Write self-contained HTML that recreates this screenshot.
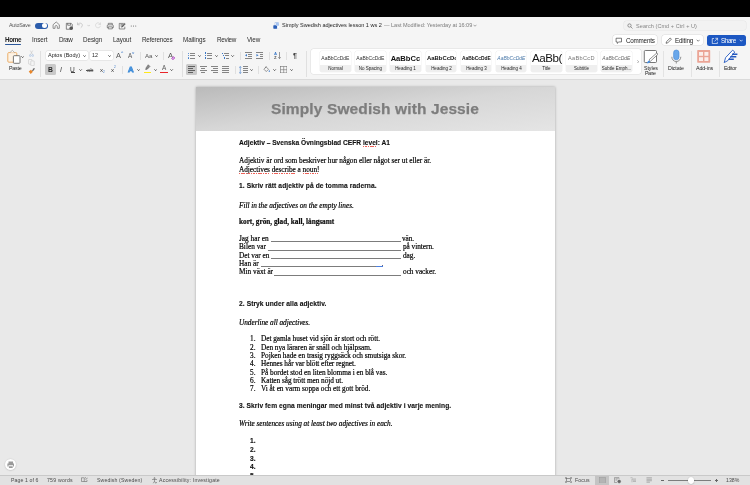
<!DOCTYPE html>
<html><head><meta charset="utf-8">
<style>
*{box-sizing:border-box;margin:0;padding:0}
html,body{width:750px;height:485px;overflow:hidden;background:#e9e9e9;font-family:"Liberation Sans",sans-serif;}
.t{position:absolute;white-space:nowrap;line-height:1;will-change:transform}
.a{position:absolute}
#top{position:absolute;left:0;top:0;width:750px;height:16.5px;background:#000}
#chrome{position:absolute;left:0;top:16.5px;width:750px;height:63px;background:#f5f5f5;border-bottom:1px solid #dadada}
#doc{position:absolute;left:0;top:0;width:750px;height:475px;overflow:hidden}
#page{position:absolute;left:196px;top:87px;width:358.5px;height:400px;background:#fff;box-shadow:0 0 2.5px rgba(0,0,0,.3)}
#banner{position:absolute;left:196px;top:87px;width:358.5px;height:44px;background:linear-gradient(to bottom right,#bababa,#d7d7d7 50%,#e5e5e5)}
#status{position:absolute;left:0;top:475px;width:750px;height:10px;background:#e2e2e2;border-top:.5px solid #c9c9c9}
.sep{position:absolute;width:.6px;background:#d6d6d6}
.box{position:absolute;background:#fff;border-radius:1.5px;box-shadow:0 0 0 .4px #d9d9d9}
.tile{position:absolute;top:51.2px;width:30.8px;height:20.6px;background:#fff;border-radius:1.5px;overflow:hidden;box-shadow:0 0 0 .3px #e6e6e6}
.tile i{position:absolute;left:0;top:13.6px;width:100%;height:7px;background:#efefef;display:block}
.tile .t{left:0;width:100%;text-align:center}
.ul{position:absolute;height:.6px;background:#7c7c7c}
</style></head><body>
<div id="doc">
<div id="page"></div>
<div id="banner"></div>

<span class="t" style="left:271.20px;top:101.18px;font-size:15.50px;font-weight:bold;color:#7d7d7d;-webkit-text-stroke:.25px #7d7d7d;letter-spacing:0.115px;">Simply Swedish with Jessie</span>
<span class="t" style="left:239.00px;top:140.17px;font-size:6.65px;font-weight:bold;color:#111;-webkit-text-stroke:.12px #111;letter-spacing:-0.002px;">Adjektiv – Svenska Övningsblad CEFR level: A1</span>
<span class="t" style="left:239.00px;top:157.39px;font-size:7.30px;font-family:'Liberation Serif',serif;color:#000;-webkit-text-stroke:.18px #000;letter-spacing:-0.017px;">Adjektiv är ord som beskriver hur någon eller något ser ut eller är.</span>
<span class="t" style="left:239.00px;top:165.89px;font-size:7.30px;font-family:'Liberation Serif',serif;color:#000;-webkit-text-stroke:.18px #000;letter-spacing:-0.029px;">Adjectives describe a noun!</span>
<span class="t" style="left:239.00px;top:183.37px;font-size:6.65px;font-weight:bold;color:#111;-webkit-text-stroke:.12px #111;letter-spacing:0.096px;">1. Skriv rätt adjektiv på de tomma raderna.</span>
<span class="t" style="left:239.00px;top:201.79px;font-size:7.30px;font-family:'Liberation Serif',serif;font-style:italic;color:#000;-webkit-text-stroke:.18px #000;letter-spacing:-0.037px;">Fill in the adjectives on the empty lines.</span>
<span class="t" style="left:239.00px;top:218.09px;font-size:7.30px;font-family:'Liberation Serif',serif;font-weight:bold;color:#111;-webkit-text-stroke:.18px #000;letter-spacing:-0.029px;">kort, grön, glad, kall, långsamt</span>
<span class="t" style="left:239.00px;top:235.09px;font-size:7.30px;font-family:'Liberation Serif',serif;color:#000;-webkit-text-stroke:.18px #000;">Jag har en</span>
<div class="ul" style="left:270.6px;top:241.45px;width:130.2px"></div>
<span class="t" style="left:402.30px;top:235.09px;font-size:7.30px;font-family:'Liberation Serif',serif;color:#000;-webkit-text-stroke:.18px #000;letter-spacing:-0.116px;">vän.</span>
<span class="t" style="left:239.00px;top:243.39px;font-size:7.30px;font-family:'Liberation Serif',serif;color:#000;-webkit-text-stroke:.18px #000;">Bilen var</span>
<div class="ul" style="left:267.7px;top:249.75px;width:133.8px"></div>
<span class="t" style="left:403.00px;top:243.39px;font-size:7.30px;font-family:'Liberation Serif',serif;color:#000;-webkit-text-stroke:.18px #000;letter-spacing:-0.029px;">på vintern.</span>
<span class="t" style="left:239.00px;top:251.69px;font-size:7.30px;font-family:'Liberation Serif',serif;color:#000;-webkit-text-stroke:.18px #000;">Det var en</span>
<div class="ul" style="left:271.2px;top:258.05px;width:130.3px"></div>
<span class="t" style="left:403.00px;top:251.69px;font-size:7.30px;font-family:'Liberation Serif',serif;color:#000;-webkit-text-stroke:.18px #000;letter-spacing:-0.041px;">dag.</span>
<span class="t" style="left:239.00px;top:259.99px;font-size:7.30px;font-family:'Liberation Serif',serif;color:#000;-webkit-text-stroke:.18px #000;">Han är</span>
<div class="ul" style="left:260.5px;top:266.35px;width:122.8px"></div>
<span class="t" style="left:239.00px;top:268.19px;font-size:7.30px;font-family:'Liberation Serif',serif;color:#000;-webkit-text-stroke:.18px #000;">Min växt är</span>
<div class="ul" style="left:274.3px;top:274.55px;width:127.2px"></div>
<span class="t" style="left:403.00px;top:268.19px;font-size:7.30px;font-family:'Liberation Serif',serif;color:#000;-webkit-text-stroke:.18px #000;letter-spacing:-0.022px;">och vacker.</span>
<div class="a" style="left:376.4px;top:266.2px;width:6.9px;height:.8px;background:#4a7fe0"></div><div class="a" style="left:382.3px;top:265.2px;width:.7px;height:1.2px;background:#6a6a8a"></div>
<span class="t" style="left:239.00px;top:301.47px;font-size:6.65px;font-weight:bold;color:#111;-webkit-text-stroke:.12px #111;letter-spacing:0.081px;">2. Stryk under alla adjektiv.</span>
<span class="t" style="left:239.00px;top:318.59px;font-size:7.30px;font-family:'Liberation Serif',serif;font-style:italic;color:#000;-webkit-text-stroke:.18px #000;letter-spacing:-0.031px;">Underline all adjectives.</span>
<span class="t" style="left:250.00px;top:335.49px;font-size:7.30px;font-family:'Liberation Serif',serif;color:#000;-webkit-text-stroke:.18px #000;">1.</span>
<span class="t" style="left:260.90px;top:335.49px;font-size:7.30px;font-family:'Liberation Serif',serif;color:#000;-webkit-text-stroke:.18px #000;letter-spacing:-0.047px;">Det gamla huset vid sjön är stort och rött.</span>
<span class="t" style="left:250.00px;top:343.76px;font-size:7.30px;font-family:'Liberation Serif',serif;color:#000;-webkit-text-stroke:.18px #000;">2.</span>
<span class="t" style="left:260.90px;top:343.76px;font-size:7.30px;font-family:'Liberation Serif',serif;color:#000;-webkit-text-stroke:.18px #000;letter-spacing:-0.039px;">Den nya läraren är snäll och hjälpsam.</span>
<span class="t" style="left:250.00px;top:352.03px;font-size:7.30px;font-family:'Liberation Serif',serif;color:#000;-webkit-text-stroke:.18px #000;">3.</span>
<span class="t" style="left:260.90px;top:352.03px;font-size:7.30px;font-family:'Liberation Serif',serif;color:#000;-webkit-text-stroke:.18px #000;letter-spacing:-0.034px;">Pojken hade en trasig ryggsäck och smutsiga skor.</span>
<span class="t" style="left:250.00px;top:360.30px;font-size:7.30px;font-family:'Liberation Serif',serif;color:#000;-webkit-text-stroke:.18px #000;">4.</span>
<span class="t" style="left:260.90px;top:360.30px;font-size:7.30px;font-family:'Liberation Serif',serif;color:#000;-webkit-text-stroke:.18px #000;letter-spacing:-0.052px;">Hennes hår var blött efter regnet.</span>
<span class="t" style="left:250.00px;top:368.57px;font-size:7.30px;font-family:'Liberation Serif',serif;color:#000;-webkit-text-stroke:.18px #000;">5.</span>
<span class="t" style="left:260.90px;top:368.57px;font-size:7.30px;font-family:'Liberation Serif',serif;color:#000;-webkit-text-stroke:.18px #000;letter-spacing:-0.032px;">På bordet stod en liten blomma i en blå vas.</span>
<span class="t" style="left:250.00px;top:376.84px;font-size:7.30px;font-family:'Liberation Serif',serif;color:#000;-webkit-text-stroke:.18px #000;">6.</span>
<span class="t" style="left:260.90px;top:376.84px;font-size:7.30px;font-family:'Liberation Serif',serif;color:#000;-webkit-text-stroke:.18px #000;letter-spacing:-0.053px;">Katten såg trött men nöjd ut.</span>
<span class="t" style="left:250.00px;top:385.11px;font-size:7.30px;font-family:'Liberation Serif',serif;color:#000;-webkit-text-stroke:.18px #000;">7.</span>
<span class="t" style="left:260.90px;top:385.11px;font-size:7.30px;font-family:'Liberation Serif',serif;color:#000;-webkit-text-stroke:.18px #000;letter-spacing:-0.020px;">Vi åt en varm soppa och ett gott bröd.</span>
<span class="t" style="left:239.00px;top:402.87px;font-size:6.65px;font-weight:bold;color:#111;-webkit-text-stroke:.12px #111;letter-spacing:0.068px;">3. Skriv fem egna meningar med minst två adjektiv i varje mening.</span>
<span class="t" style="left:239.00px;top:420.19px;font-size:7.30px;font-family:'Liberation Serif',serif;font-style:italic;color:#000;-webkit-text-stroke:.18px #000;letter-spacing:-0.022px;">Write sentences using at least two adjectives in each.</span>
<span class="t" style="left:250.00px;top:437.87px;font-size:6.65px;font-weight:bold;color:#111;-webkit-text-stroke:.12px #111;">1.</span>
<span class="t" style="left:250.00px;top:446.72px;font-size:6.65px;font-weight:bold;color:#111;-webkit-text-stroke:.12px #111;">2.</span>
<span class="t" style="left:250.00px;top:455.57px;font-size:6.65px;font-weight:bold;color:#111;-webkit-text-stroke:.12px #111;">3.</span>
<span class="t" style="left:250.00px;top:464.42px;font-size:6.65px;font-weight:bold;color:#111;-webkit-text-stroke:.12px #111;">4.</span>
<span class="t" style="left:250.00px;top:473.27px;font-size:6.65px;font-weight:bold;color:#111;-webkit-text-stroke:.12px #111;">5.</span>
<div class="a" style="left:362.9px;top:146.0px;width:14.4px;height:1px;background:repeating-linear-gradient(90deg,#ee6158 0 1.1px,transparent 1.1px 1.7px)"></div>
<div class="a" style="left:239.0px;top:173.0px;width:31.2px;height:1px;background:repeating-linear-gradient(90deg,#ee6158 0 1.1px,transparent 1.1px 1.7px)"></div>
<div class="a" style="left:272.2px;top:173.0px;width:24.2px;height:1px;background:repeating-linear-gradient(90deg,#ee6158 0 1.1px,transparent 1.1px 1.7px)"></div>
<div class="a" style="left:302.5px;top:173.0px;width:15.1px;height:1px;background:repeating-linear-gradient(90deg,#ee6158 0 1.1px,transparent 1.1px 1.7px)"></div>
</div>
<div id="top"></div><div id="chrome"></div>
<!-- title bar -->
<div class="a" style="left:35.4px;top:22.5px;width:12.5px;height:6px;border-radius:3px;background:#2b5cab"></div>
<div class="a" style="left:42.3px;top:23px;width:5px;height:5px;border-radius:2.5px;background:#fff"></div>
<svg class="a" style="left:52.4px;top:21.4px" width="8.400" height="8.400" viewBox="0 0 16 16" fill="none" stroke="#5a5a5a" stroke-width="1.200"><path d="M2 7.200 8 1.800l6 5.400V14h-3.800v-3.200a2.200 2.200 0 0 0-4.400 0V14H2z"/></svg>
<svg class="a" style="left:64.6px;top:21.5px" width="8.600" height="8.600" viewBox="0 0 16 16" fill="none" stroke="#555" stroke-width="1.3"><path d="M2.500 2.500h9l2 2v9h-11z M5 2.500v3.500h5.500v-3.500"/><circle cx="11.500" cy="11.500" r="2.600" fill="#555"/></svg>
<svg class="a" style="left:76.4px;top:21.3px" width="8" height="8" viewBox="0 0 16 16" fill="none" stroke="#b9b9b9" stroke-width="1.4"><path d="M3 3v4.500h4.500 M3.300 7.200C5 4.500 8.500 3.500 11 5.200c2.600 1.800 2.300 5.800-1.500 8.300"/></svg>
<svg class="a" style="left:86.8px;top:24px" width="3.4" height="3" viewBox="0 0 8 6" fill="none" stroke="#b9b9b9" stroke-width="1.4"><path d="M1 1.500l3 3 3-3"/></svg>
<svg class="a" style="left:93.8px;top:21.3px" width="8" height="8" viewBox="0 0 16 16" fill="none" stroke="#d2d2d2" stroke-width="1.4"><path d="M13 3v4h-4 M12.800 7A5 5 0 1 0 13 9.500"/></svg>
<svg class="a" style="left:105.600px;top:21.5px" width="8.600" height="8.200" viewBox="0 0 17 16" fill="none" stroke="#555" stroke-width="1.3"><path d="M4.500 5.500v-3h8v3 M4.500 11H2.500V7.500a2 2 0 0 1 2-2h8a2 2 0 0 1 2 2V11h-2 M4.500 9.500h8v4h-8z"/></svg>
<svg class="a" style="left:117.600px;top:21.5px" width="8.600" height="8.400" viewBox="0 0 17 16" fill="none" stroke="#555" stroke-width="1.3"><path d="M13.500 9v4.500h-11v-11h9 M5 5h5 M5 7.500h3"/><path d="M14.500 3.500 9 9.500l-2 .8.600-2.200 5.500-5.800z" fill="#555" stroke-width=".8"/></svg>
<svg class="a" style="left:130px;top:24.6px" width="7" height="2" viewBox="0 0 14 4" fill="#555"><circle cx="2.500" cy="2" r="1.050"/><circle cx="7" cy="2" r="1.050"/><circle cx="11.500" cy="2" r="1.050"/></svg>
<!-- doc title -->
<svg class="a" style="left:272.6px;top:21.6px" width="6.800" height="7.600" viewBox="0 0 14 16"><path d="M4 1h7l2.500 2.500V15H4z" fill="#fff" stroke="#8aa8d8" stroke-width="1"/><rect x=".5" y="7" width="8" height="7" rx="1" fill="#2b5fb8"/><path d="M6 1h5l2.500 2.500V8H6z" fill="#a8c4ee"/></svg>
<svg class="a" style="left:472.8px;top:24.4px" width="4" height="3" viewBox="0 0 8 6" fill="none" stroke="#777" stroke-width="1.300"><path d="M1 1.500l3 3 3-3"/></svg>
<!-- search -->
<div class="a" style="left:624.4px;top:20.8px;width:121.800px;height:9.500px;border-radius:2.500px;background:#f2f2f2;box-shadow:0 0 0 .5px #e5e5e5"></div>
<svg class="a" style="left:626.8px;top:22.6px" width="6" height="6" viewBox="0 0 12 12" fill="none" stroke="#666" stroke-width="1.300"><circle cx="5" cy="5" r="3.300"/><path d="M7.500 7.500 11 11"/></svg>
<!-- comments / editing / share -->
<div class="a" style="left:612.7px;top:35.3px;width:44.300px;height:10.200px;border-radius:2.500px;background:#fff;box-shadow:0 0 0 .5px #dcdcdc"></div>
<svg class="a" style="left:615.4px;top:36.9px" width="7.600" height="7.400" viewBox="0 0 15 15" fill="none" stroke="#333" stroke-width="1.300"><path d="M2 2.500h11v7.500H7.500L4.500 13v-3H2z"/></svg>
<div class="a" style="left:662.1px;top:35.3px;width:40.600px;height:10.200px;border-radius:2.500px;background:#fff;box-shadow:0 0 0 .5px #dcdcdc"></div>
<svg class="a" style="left:665.2px;top:36.8px" width="7.400" height="7.400" viewBox="0 0 15 15" fill="none" stroke="#333" stroke-width="1.300"><path d="M10.500 2 13 4.500 5.500 12l-3.300.800.800-3.300z"/></svg>
<svg class="a" style="left:696px;top:39.3px" width="4.400" height="3" viewBox="0 0 8 6" fill="none" stroke="#444" stroke-width="1.300"><path d="M1 1.500l3 3 3-3"/></svg>
<div class="a" style="left:707.4px;top:34.9px;width:38.300px;height:10.900px;border-radius:2.500px;background:#1c57c2"></div>
<svg class="a" style="left:711px;top:36.6px" width="7.600" height="7.600" viewBox="0 0 15 15" fill="none" stroke="#fff" stroke-width="1.300"><path d="M6 3H2.500v10h10V9.500"/><path d="M8.500 2.500H13V7 M13 2.500 7 8.500"/></svg>
<svg class="a" style="left:738.6px;top:39.3px" width="4.400" height="3" viewBox="0 0 8 6" fill="none" stroke="#fff" stroke-width="1.300"><path d="M1 1.500l3 3 3-3"/></svg>

<span class="t" style="left:9.40px;top:22.81px;font-size:5.30px;color:#555;letter-spacing:-0.173px;">AutoSave</span>
<span class="t" style="left:5.10px;top:36.57px;font-size:6.30px;font-weight:bold;color:#222;letter-spacing:-0.351px;">Home</span>
<span class="t" style="left:31.80px;top:36.57px;font-size:6.30px;color:#2c2c2c;letter-spacing:-0.059px;">Insert</span>
<span class="t" style="left:58.60px;top:36.57px;font-size:6.30px;color:#2c2c2c;letter-spacing:-0.300px;">Draw</span>
<span class="t" style="left:82.80px;top:36.57px;font-size:6.30px;color:#2c2c2c;letter-spacing:-0.085px;">Design</span>
<span class="t" style="left:112.50px;top:36.57px;font-size:6.30px;color:#2c2c2c;letter-spacing:-0.153px;">Layout</span>
<span class="t" style="left:141.90px;top:36.57px;font-size:6.30px;color:#2c2c2c;letter-spacing:-0.182px;">References</span>
<span class="t" style="left:183.40px;top:36.57px;font-size:6.30px;color:#2c2c2c;letter-spacing:-0.064px;">Mailings</span>
<span class="t" style="left:216.90px;top:36.57px;font-size:6.30px;color:#2c2c2c;letter-spacing:-0.259px;">Review</span>
<span class="t" style="left:246.80px;top:36.57px;font-size:6.30px;color:#2c2c2c;letter-spacing:-0.085px;">View</span>
<div class="a" style="left:5px;top:44px;width:16.3px;height:1.3px;background:#2b579a;border-radius:1px"></div>
<svg class="a" style="left:5.00px;top:48.00px" width="18.00" height="18.00" viewBox="5.00 48.00 18.00 18.00"><rect x="7.800" y="52.600" width="9" height="9.600" rx="1" fill="#fdf3e6" stroke="#eaa75c" stroke-width=".9"/><path d="M10 52.600 12.300 50.400 14.600 52.600" fill="#fff" stroke="#999" stroke-width=".7"/><rect x="13.400" y="55.700" width="6.600" height="7.600" rx=".8" fill="#fff" stroke="#555" stroke-width=".8"/></svg>
<svg class="a" style="left:21.1px;top:56.3px" width="3.2" height="2.0" viewBox="0 0 8 5" fill="none" stroke="#444" stroke-width="2.3"><path d="M1 1l3 3 3-3"/></svg>
<span class="t" style="left:8.70px;top:65.91px;font-size:5.30px;color:#222;letter-spacing:-0.191px;">Paste</span>
<svg class="a" style="left:28.50px;top:49.90px" width="5.00" height="7.00" viewBox="0 0 10 14" ><path d="M2.500 1 7 9 M7.500 1 3 9" stroke="#c4c4c4" stroke-width="1.100" fill="none"/><circle cx="2.500" cy="11" r="1.800" fill="none" stroke="#9bb8e0" stroke-width="1.100"/><circle cx="7.500" cy="11" r="1.800" fill="none" stroke="#9bb8e0" stroke-width="1.100"/></svg>
<svg class="a" style="left:27.80px;top:58.90px" width="7.00" height="7.40" viewBox="0 0 14 15" ><rect x="1" y="1" width="7" height="9.500" rx="1" fill="none" stroke="#c8c8c8" stroke-width="1.200"/><rect x="5.500" y="4" width="7" height="9.500" rx="1" fill="#f5f5f5" stroke="#c8c8c8" stroke-width="1.200"/></svg>
<svg class="a" style="left:27.60px;top:68.30px" width="7.40" height="6.60" viewBox="0 0 15 13" ><path d="M1.500 7 6 3.500l4 4L5.500 12z" fill="#e8862a"/><path d="M8 4.500 12.500 1l1 1-3.500 4.500z" fill="#555"/><path d="M10 1h4" stroke="#555" stroke-width="1"/></svg>
<div class="sep" style="left:40.4px;top:50.5px;height:26.2px;background:#e0e0e0"></div>
<div class="box" style="left:45.6px;top:50.6px;width:42.600px;height:9.600px"></div>
<span class="t" style="left:48.00px;top:53.14px;font-size:5.50px;color:#222;letter-spacing:0.034px;">Aptos (Body)</span>
<svg class="a" style="left:83.3px;top:55.0px" width="3.2" height="2.0" viewBox="0 0 8 5" fill="none" stroke="#444" stroke-width="2.3"><path d="M1 1l3 3 3-3"/></svg>
<div class="box" style="left:90px;top:50.6px;width:22.800px;height:9.600px"></div>
<span class="t" style="left:92.40px;top:53.31px;font-size:5.30px;color:#222;">12</span>
<svg class="a" style="left:108.2px;top:55.0px" width="3.2" height="2.0" viewBox="0 0 8 5" fill="none" stroke="#444" stroke-width="2.3"><path d="M1 1l3 3 3-3"/></svg>
<span class="t" style="left:116.00px;top:51.84px;font-size:7.40px;color:#555;">A</span>
<span class="t" style="left:121.00px;top:51.11px;font-size:4.00px;color:#3a78c8;font-weight:bold;">^</span>
<span class="t" style="left:128.00px;top:52.77px;font-size:6.30px;color:#555;">A</span>
<span class="t" style="left:132.20px;top:51.41px;font-size:4.00px;color:#3a78c8;font-weight:bold;">˅</span>
<div class="sep" style="left:139.6px;top:51.5px;height:8.0px;background:#e0e0e0"></div>
<span class="t" style="left:145.20px;top:52.75px;font-size:6.20px;color:#555;letter-spacing:-0.092px;">Aa</span>
<svg class="a" style="left:155.0px;top:55.2px" width="3.2" height="2.0" viewBox="0 0 8 5" fill="none" stroke="#444" stroke-width="2.3"><path d="M1 1l3 3 3-3"/></svg>
<div class="sep" style="left:163.0px;top:51.5px;height:8.0px;background:#e0e0e0"></div>
<span class="t" style="left:167.60px;top:51.67px;font-size:7.60px;color:#555;">A</span>
<svg class="a" style="left:171.10px;top:55.60px" width="4.40" height="4.00" viewBox="0 0 9 8" ><path d="M1 5 5 1l3 3-4 3.500z" fill="#d9a0e6" stroke="#b04cc0" stroke-width="1.500"/></svg>
<div class="sep" style="left:181.8px;top:50.5px;height:26.2px;background:#e0e0e0"></div>
<div class="a" style="left:45.200px;top:64.100px;width:10.600px;height:10.600px;border-radius:1.500px;background:#c9c9c9"></div>
<span class="t" style="left:48.20px;top:66.94px;font-size:6.80px;font-weight:bold;color:#2a2a2a;">B</span>
<span class="t" style="left:60.40px;top:66.94px;font-size:6.80px;font-style:italic;color:#3a3a3a;">I</span>
<span class="t" style="left:70.30px;top:66.71px;font-size:6.60px;color:#3a3a3a;">U</span>
<div class="a" style="left:70.600px;top:72.400px;width:4.600px;height:.6px;background:#444"></div>
<svg class="a" style="left:79.4px;top:68.8px" width="3.2" height="2.0" viewBox="0 0 8 5" fill="none" stroke="#444" stroke-width="2.3"><path d="M1 1l3 3 3-3"/></svg>
<span class="t" style="left:87.00px;top:66.92px;font-size:6.00px;color:#555;letter-spacing:-.1px;">ab</span>
<div class="a" style="left:86.400px;top:69.900px;width:7px;height:.6px;background:#555"></div>
<span class="t" style="left:99.90px;top:67.14px;font-size:6.10px;color:#3a3a3a;">x</span>
<span class="t" style="left:103.20px;top:70.69px;font-size:3.20px;color:#3a78c8;">2</span>
<span class="t" style="left:110.90px;top:67.14px;font-size:6.10px;color:#3a3a3a;">x</span>
<span class="t" style="left:114.20px;top:65.69px;font-size:3.20px;color:#3a78c8;">2</span>
<div class="sep" style="left:121.8px;top:65.5px;height:8.0px;background:#e0e0e0"></div>
<span class="t" style="left:127.80px;top:65.70px;font-size:7.80px;font-weight:bold;color:#9cc6f0;-webkit-text-stroke:.8px #3a8ad8;">A</span>
<svg class="a" style="left:136.7px;top:68.8px" width="3.2" height="2.0" viewBox="0 0 8 5" fill="none" stroke="#444" stroke-width="2.3"><path d="M1 1l3 3 3-3"/></svg>
<svg class="a" style="left:144.10px;top:64.00px" width="7.00" height="6.40" viewBox="0 0 14 13" ><path d="M8.500 1.500 12 5 6.500 10.500 3.500 11l.5-3z" fill="#8a8a8a" stroke="#555" stroke-width="1.100"/><path d="M2.500 12l1-1" stroke="#555"/></svg>
<div class="a" style="left:144px;top:71.500px;width:7.200px;height:1.700px;background:#ffe81a"></div>
<svg class="a" style="left:153.7px;top:68.8px" width="3.2" height="2.0" viewBox="0 0 8 5" fill="none" stroke="#444" stroke-width="2.3"><path d="M1 1l3 3 3-3"/></svg>
<span class="t" style="left:161.80px;top:65.38px;font-size:6.40px;color:#555;">A</span>
<div class="a" style="left:160.400px;top:71.500px;width:7.200px;height:1.700px;background:#e8252a"></div>
<svg class="a" style="left:170.4px;top:68.8px" width="3.2" height="2.0" viewBox="0 0 8 5" fill="none" stroke="#444" stroke-width="2.3"><path d="M1 1l3 3 3-3"/></svg>
<div class="a" style="left:187.800px;top:52.55px;width:1.300px;height:1.300px;border-radius:1px;background:#3a78c8"></div>
<div class="a" style="left:190.200px;top:52.80px;width:4.800px;height:.7px;background:#858585"></div>
<div class="a" style="left:187.800px;top:54.95px;width:1.300px;height:1.300px;border-radius:1px;background:#3a78c8"></div>
<div class="a" style="left:190.200px;top:55.20px;width:4.800px;height:.7px;background:#858585"></div>
<div class="a" style="left:187.800px;top:57.35px;width:1.300px;height:1.300px;border-radius:1px;background:#3a78c8"></div>
<div class="a" style="left:190.200px;top:57.60px;width:4.800px;height:.7px;background:#858585"></div>
<svg class="a" style="left:197.9px;top:55.0px" width="3.2" height="2.0" viewBox="0 0 8 5" fill="none" stroke="#444" stroke-width="2.3"><path d="M1 1l3 3 3-3"/></svg>
<div class="a" style="left:205px;top:52.40px;width:.8px;height:1.600px;background:#3a78c8"></div>
<div class="a" style="left:207.200px;top:52.80px;width:4.800px;height:.7px;background:#858585"></div>
<div class="a" style="left:205px;top:54.80px;width:.8px;height:1.600px;background:#3a78c8"></div>
<div class="a" style="left:207.200px;top:55.20px;width:4.800px;height:.7px;background:#858585"></div>
<div class="a" style="left:205px;top:57.20px;width:.8px;height:1.600px;background:#3a78c8"></div>
<div class="a" style="left:207.200px;top:57.60px;width:4.800px;height:.7px;background:#858585"></div>
<svg class="a" style="left:214.6px;top:55.0px" width="3.2" height="2.0" viewBox="0 0 8 5" fill="none" stroke="#444" stroke-width="2.3"><path d="M1 1l3 3 3-3"/></svg>
<div class="a" style="left:221.60px;top:52.60px;width:1.100px;height:1.200px;background:#3a78c8"></div>
<div class="a" style="left:224.00px;top:52.80px;width:4.80px;height:.7px;background:#858585"></div>
<div class="a" style="left:222.80px;top:55.00px;width:1.100px;height:1.200px;background:#3a78c8"></div>
<div class="a" style="left:225.20px;top:55.20px;width:3.60px;height:.7px;background:#858585"></div>
<div class="a" style="left:224.00px;top:57.40px;width:1.100px;height:1.200px;background:#3a78c8"></div>
<div class="a" style="left:226.40px;top:57.60px;width:2.40px;height:.7px;background:#858585"></div>
<svg class="a" style="left:231.4px;top:55.0px" width="3.2" height="2.0" viewBox="0 0 8 5" fill="none" stroke="#444" stroke-width="2.3"><path d="M1 1l3 3 3-3"/></svg>
<div class="sep" style="left:239.6px;top:51.5px;height:8.0px;background:#e0e0e0"></div>
<div class="a" style="left:244.70px;top:52.40px;width:7.00px;height:0.70px;background:#858585"></div>
<div class="a" style="left:247.90px;top:54.30px;width:3.80px;height:0.70px;background:#858585"></div>
<div class="a" style="left:247.90px;top:56.20px;width:3.80px;height:0.70px;background:#858585"></div>
<div class="a" style="left:244.70px;top:58.10px;width:7.00px;height:0.70px;background:#858585"></div>
<svg class="a" style="left:244.60px;top:54.30px" width="2.60" height="2.60" viewBox="0 0 6 6" ><path d="M5 0v6L0 3z" fill="#3a78c8"/></svg>
<div class="a" style="left:256.30px;top:52.40px;width:7.00px;height:0.70px;background:#858585"></div>
<div class="a" style="left:259.50px;top:54.30px;width:3.80px;height:0.70px;background:#858585"></div>
<div class="a" style="left:259.50px;top:56.20px;width:3.80px;height:0.70px;background:#858585"></div>
<div class="a" style="left:256.30px;top:58.10px;width:7.00px;height:0.70px;background:#858585"></div>
<svg class="a" style="left:256.20px;top:54.30px" width="2.60" height="2.60" viewBox="0 0 6 6" ><path d="M1 0v6l5-3z" fill="#3a78c8"/></svg>
<div class="sep" style="left:268.5px;top:51.5px;height:8.0px;background:#e0e0e0"></div>
<span class="t" style="left:273.60px;top:51.84px;font-size:4.20px;font-weight:bold;color:#3a78c8;">A</span>
<span class="t" style="left:273.80px;top:55.74px;font-size:4.20px;font-weight:bold;color:#555;">Z</span>
<svg class="a" style="left:278.00px;top:51.90px" width="3.00" height="7.40" viewBox="0 0 6 15" ><path d="M3 0v13 M.5 10.500 3 13.500l2.500-3" fill="none" stroke="#555" stroke-width="1.200"/></svg>
<div class="sep" style="left:286.4px;top:51.5px;height:8.0px;background:#e0e0e0"></div>
<span class="t" style="left:293.20px;top:52.07px;font-size:7.00px;font-weight:bold;color:#444;">¶</span>
<div class="sep" style="left:305.6px;top:50.5px;height:26.2px;background:#e0e0e0"></div>
<div class="a" style="left:186.400px;top:64.100px;width:10.600px;height:10.600px;border-radius:1.500px;background:#c9c9c9"></div>
<div class="a" style="left:188.20px;top:66.40px;width:7.00px;height:0.70px;background:#606060"></div>
<div class="a" style="left:188.20px;top:68.30px;width:4.60px;height:0.70px;background:#606060"></div>
<div class="a" style="left:188.20px;top:70.20px;width:7.00px;height:0.70px;background:#606060"></div>
<div class="a" style="left:188.20px;top:72.10px;width:4.60px;height:0.70px;background:#606060"></div>
<div class="a" style="left:199.50px;top:66.40px;width:7.00px;height:0.70px;background:#858585"></div>
<div class="a" style="left:200.70px;top:68.30px;width:4.60px;height:0.70px;background:#858585"></div>
<div class="a" style="left:199.50px;top:70.20px;width:7.00px;height:0.70px;background:#858585"></div>
<div class="a" style="left:200.70px;top:72.10px;width:4.60px;height:0.70px;background:#858585"></div>
<div class="a" style="left:211.00px;top:66.40px;width:7.00px;height:0.70px;background:#858585"></div>
<div class="a" style="left:213.40px;top:68.30px;width:4.60px;height:0.70px;background:#858585"></div>
<div class="a" style="left:211.00px;top:70.20px;width:7.00px;height:0.70px;background:#858585"></div>
<div class="a" style="left:213.40px;top:72.10px;width:4.60px;height:0.70px;background:#858585"></div>
<div class="a" style="left:222.30px;top:66.40px;width:7.00px;height:0.70px;background:#858585"></div>
<div class="a" style="left:222.30px;top:68.30px;width:7.00px;height:0.70px;background:#858585"></div>
<div class="a" style="left:222.30px;top:70.20px;width:7.00px;height:0.70px;background:#858585"></div>
<div class="a" style="left:222.30px;top:72.10px;width:7.00px;height:0.70px;background:#858585"></div>
<div class="sep" style="left:234.5px;top:65.5px;height:8.0px;background:#e0e0e0"></div>
<div class="a" style="left:242.70px;top:66.40px;width:5.00px;height:0.70px;background:#858585"></div>
<div class="a" style="left:242.70px;top:68.30px;width:5.00px;height:0.70px;background:#858585"></div>
<div class="a" style="left:242.70px;top:70.20px;width:5.00px;height:0.70px;background:#858585"></div>
<div class="a" style="left:242.70px;top:72.10px;width:5.00px;height:0.70px;background:#858585"></div>
<svg class="a" style="left:239.30px;top:65.60px" width="2.60" height="8.00" viewBox="0 0 5 16" ><path d="M2.500 1v14 M.5 3.500 2.500 1l2 2.500 M.5 12.500l2 2.500 2-2.500" fill="none" stroke="#3a78c8" stroke-width="1.100"/></svg>
<svg class="a" style="left:250.1px;top:68.8px" width="3.2" height="2.0" viewBox="0 0 8 5" fill="none" stroke="#444" stroke-width="2.3"><path d="M1 1l3 3 3-3"/></svg>
<div class="sep" style="left:258.0px;top:65.5px;height:8.0px;background:#e0e0e0"></div>
<svg class="a" style="left:263.10px;top:66.10px" width="7.00" height="6.60" viewBox="0 0 14 13" ><path d="M6 1.500 11 6.500 6.500 11 2 6.500z" fill="none" stroke="#555" stroke-width="1.200"/><path d="M4.500 3 7 .8" stroke="#555" stroke-width="1.100"/><path d="M12.500 8c.8 1.200 1.200 2 1.200 2.600a1.200 1.200 0 0 1-2.400 0c0-.6.400-1.400 1.200-2.600z" fill="#3a78c8"/></svg>
<svg class="a" style="left:273.4px;top:68.8px" width="3.2" height="2.0" viewBox="0 0 8 5" fill="none" stroke="#444" stroke-width="2.3"><path d="M1 1l3 3 3-3"/></svg>
<svg class="a" style="left:279.90px;top:65.90px" width="7.40" height="7.40" viewBox="0 0 15 15" ><rect x="1" y="1" width="13" height="13" fill="none" stroke="#666" stroke-width="1.100"/><path d="M7.500 1v13 M1 7.500h13" stroke="#666" stroke-width="1.100"/></svg>
<svg class="a" style="left:290.0px;top:68.8px" width="3.2" height="2.0" viewBox="0 0 8 5" fill="none" stroke="#444" stroke-width="2.3"><path d="M1 1l3 3 3-3"/></svg>
<div class="a" style="left:310.600px;top:48.700px;width:330.600px;height:25.500px;border-radius:2.500px;background:#fff;box-shadow:0 0 0 .5px #dedede"></div>
<div class="tile" style="left:320.2px"><span class="t" style="top:4.50px;font-size:5.0px;color:#333;">AaBbCcDdE</span><i></i><span class="t" style="top:15.7px;font-size:4.5px;color:#1a1a1a">Normal</span></div>
<div class="tile" style="left:355.3px"><span class="t" style="top:4.50px;font-size:5.0px;color:#333;">AaBbCcDdE</span><i></i><span class="t" style="top:15.7px;font-size:4.5px;color:#1a1a1a">No Spacing</span></div>
<div class="tile" style="left:390.4px"><span class="t" style="top:3.80px;font-size:7.6px;color:#111;font-weight:bold;">AaBbCc</span><i></i><span class="t" style="top:15.7px;font-size:4.5px;color:#1a1a1a">Heading 1</span></div>
<div class="tile" style="left:425.5px"><span class="t" style="top:5.05px;font-size:5.9px;color:#111;font-weight:bold;text-align:left;left:1.2px;">AaBbCcDc</span><i></i><span class="t" style="top:15.7px;font-size:4.5px;color:#1a1a1a">Heading 2</span></div>
<div class="tile" style="left:460.6px"><span class="t" style="top:5.55px;font-size:4.9px;color:#111;font-weight:bold;">AaBbCcDdE</span><i></i><span class="t" style="top:15.7px;font-size:4.5px;color:#1a1a1a">Heading 3</span></div>
<div class="tile" style="left:495.7px"><span class="t" style="top:4.50px;font-size:5.0px;color:#4a78a8;font-style:italic;">AaBbCcDdE</span><i></i><span class="t" style="top:15.7px;font-size:4.5px;color:#1a1a1a">Heading 4</span></div>
<div class="tile" style="left:530.8px"><span class="t" style="top:1.20px;font-size:11.6px;color:#111;letter-spacing:-.45px;text-align:left;left:1.2px;">AaBb(</span><i></i><span class="t" style="top:15.7px;font-size:4.5px;color:#1a1a1a">Title</span></div>
<div class="tile" style="left:565.9px"><span class="t" style="top:5.20px;font-size:5.6px;color:#777;letter-spacing:.3px;">AaBbCcD</span><i></i><span class="t" style="top:15.7px;font-size:4.5px;color:#1a1a1a">Subtitle</span></div>
<div class="tile" style="left:601.0px"><span class="t" style="top:4.50px;font-size:5.0px;color:#666;font-style:italic;">AaBbCcDdE</span><i></i><span class="t" style="top:15.7px;font-size:4.5px;color:#1a1a1a">Subtle Emph...</span></div>
<svg class="a" style="left:636.70px;top:59.90px" width="2.20" height="3.40" viewBox="0 0 5 8" ><path d="M1 1l3 3-3 3" fill="none" stroke="#555" stroke-width="1.300"/></svg>
<svg class="a" style="left:642.00px;top:48.00px" width="18.00" height="18.00" viewBox="642.00 48.00 18.00 18.00"><rect x="644.3" y="50.500" width="12.200" height="12" rx="1" fill="#fff" stroke="#555" stroke-width=".8"/><path d="M658 54.200 650.500 61.200 649 59.800 656.800 53z" fill="#fff" stroke="#666" stroke-width=".7"/><path d="M650.300 61.300c-.6 1.700-2 2.300-3.800 2 .9-.6.900-2 2.300-2.900z" fill="#4a90e0"/></svg>
<span class="t" style="left:643.50px;top:65.91px;font-size:5.30px;color:#222;letter-spacing:-0.089px;">Styles</span>
<span class="t" style="left:645.20px;top:71.01px;font-size:5.30px;color:#222;letter-spacing:-0.444px;">Pane</span>
<div class="sep" style="left:663.1px;top:50.5px;height:26.2px;background:#e3e3e3"></div>
<svg class="a" style="left:668.00px;top:48.00px" width="17.00" height="18.00" viewBox="668.00 48.00 17.00 18.00"><rect x="673.600" y="50" width="5.400" height="9.800" rx="2.700" fill="#69a7ea" stroke="#3f86d6" stroke-width=".6"/><path d="M671.800 56.800c0 2.800 2 4.700 4.500 4.700s4.500-1.900 4.500-4.700 M676.300 61.500v2" fill="none" stroke="#777" stroke-width=".8"/></svg>
<span class="t" style="left:668.40px;top:65.91px;font-size:5.30px;color:#222;letter-spacing:-0.099px;">Dictate</span>
<div class="sep" style="left:690.7px;top:50.5px;height:26.2px;background:#e3e3e3"></div>
<svg class="a" style="left:696.00px;top:49.00px" width="16.00" height="15.00" viewBox="696.00 49.00 16.00 15.00"><rect x="697.200" y="50.100" width="13" height="12.600" rx=".6" fill="#eba596"/><rect x="699" y="52" width="4" height="3.800" fill="#fbeeea"/><rect x="704.400" y="52" width="4" height="3.800" fill="#fbeeea"/><rect x="699" y="57.200" width="4" height="3.800" fill="#fbeeea"/><rect x="704.400" y="57.200" width="4" height="3.800" fill="#fbeeea"/></svg>
<span class="t" style="left:695.50px;top:65.91px;font-size:5.30px;color:#222;letter-spacing:-0.124px;">Add-ins</span>
<div class="sep" style="left:718.6px;top:50.5px;height:26.2px;background:#e3e3e3"></div>
<svg class="a" style="left:722.00px;top:48.00px" width="18.00" height="18.00" viewBox="722.00 48.00 18.00 18.00"><path d="M724.200 62.600 725.600 57.600 732.600 50.200 734.800 52 727.800 60.600z" fill="#fff" stroke="#2358c0" stroke-width=".9"/><path d="M732 54.300h5.400 M730.300 56.800h6 M728.600 59.300h5.200" stroke="#2358c0" stroke-width="1.400"/></svg>
<span class="t" style="left:724.10px;top:65.91px;font-size:5.30px;color:#222;letter-spacing:-0.191px;">Editor</span>
<span class="t" style="left:281.70px;top:22.70px;font-size:5.55px;color:#1c1c1c;letter-spacing:-0.020px;">Simply Swedish adjectives lesson 1 ws 2</span>
<span class="t" style="left:383.50px;top:22.70px;font-size:5.55px;color:#7b7b7b;letter-spacing:-0.025px;">— Last Modified: Yesterday at 16:09</span>
<span class="t" style="left:635.90px;top:23.54px;font-size:5.50px;color:#858585;letter-spacing:0.074px;">Search (Cmd + Ctrl + U)</span>
<span class="t" style="left:625.60px;top:37.57px;font-size:6.30px;color:#1c1c1c;letter-spacing:-0.232px;">Comments</span>
<span class="t" style="left:675.10px;top:37.57px;font-size:6.30px;color:#1c1c1c;letter-spacing:-0.166px;">Editing</span>
<span class="t" style="left:721.00px;top:37.57px;font-size:6.30px;color:#fff;letter-spacing:-0.402px;">Share</span>
<div id="status"></div>
<div class="a" style="left:5px;top:459px;width:11px;height:11px;border-radius:5.500px;background:#fff;box-shadow:0 .3px 1.500px rgba(0,0,0,.28)"></div>
<svg class="a" style="left:6.7px;top:460.7px" width="7.600" height="7.600" viewBox="1 1.500 10 9.500"><path d="M3 4.500V2h6v2.500z M1.500 4.500h9v4h-1.500v-1.500h-6v1.500H1.500z M3.500 8h5v2.500h-5z" fill="#9a9a9a"/></svg>
<svg class="a" style="left:81.4px;top:477.2px" width="7" height="6" viewBox="0 0 14 12" fill="none" stroke="#555" stroke-width="1"><path d="M1 1.500h4.500l1 1V10l-1-1H1z M6.500 2.500l1-1H10 M6.500 10l1-1H12V6"/><path d="M9.500 5.500 13 1.500" stroke-width="1.200"/></svg>
<svg class="a" style="left:150.6px;top:476.8px" width="7" height="7" viewBox="0 0 14 14" fill="none" stroke="#555" stroke-width="1"><circle cx="7" cy="2.500" r="1.300"/><path d="M2 5h10 M7 5v3.500 M7 8.500 4.500 12.500 M7 8.500l2.500 4"/><path d="M9.500 12.500l2-2.500" stroke-width="1.200"/></svg>
<svg class="a" style="left:565px;top:477.3px" width="7" height="6" viewBox="0 0 14 12" fill="none" stroke="#555" stroke-width="1.100"><rect x="3" y="3" width="8" height="6"/><path d="M1 3.500V1h2.500 M10.500 1H13v2.500 M13 8.500V11h-2.500 M3.500 11H1V8.500"/></svg>
<div class="a" style="left:594.7px;top:475.5px;width:14.700px;height:9.500px;background:#c4c4c4"></div>
<svg class="a" style="left:598.6px;top:477.1px" width="7" height="6.400" viewBox="0 0 14 13"><rect x=".5" y=".5" width="13" height="12" fill="#b4b4b4" stroke="#9a9a9a" stroke-width="1"/></svg>
<svg class="a" style="left:614.4px;top:477.1px" width="7.400" height="6.600" viewBox="0 0 15 13" fill="none" stroke="#666" stroke-width="1"><path d="M1 1h9v3M1 1v10h5 M3 3.500h5 M3 6h3"/><circle cx="10.500" cy="9" r="3" fill="#666"/></svg>
<svg class="a" style="left:630.2px;top:477.4px" width="7" height="6" viewBox="0 0 14 12" fill="none" stroke="#8e8e8e" stroke-width="1"><path d="M1 1.500h4 M4 4h8 M6 6.500h6 M6 9h6 M4 4v6.500"/></svg>
<svg class="a" style="left:645.6px;top:477.4px" width="6.400" height="6" viewBox="0 0 13 12" fill="none" stroke="#7c7c7c" stroke-width="1.100"><path d="M1 1.500h11 M1 4.500h11 M1 7.500h11 M1 10.500h7"/></svg>
<div class="a" style="left:660.6px;top:479.9px;width:3.200px;height:.9px;background:#666"></div>
<div class="a" style="left:667.7px;top:480px;width:43px;height:.8px;background:#7d7d7d"></div>
<div class="a" style="left:687.6px;top:476.900px;width:6.800px;height:6.800px;border-radius:3.400px;background:#fff;box-shadow:0 .3px 1.200px rgba(0,0,0,.35)"></div>
<div class="a" style="left:714.7px;top:479.9px;width:3.200px;height:.9px;background:#666"></div>
<div class="a" style="left:715.85px;top:478.750px;width:.9px;height:3.200px;background:#666"></div>

<span class="t" style="left:10.50px;top:478.00px;font-size:5.20px;color:#4a4a4a;letter-spacing:0.082px;">Page 1 of 6</span>
<span class="t" style="left:47.00px;top:478.00px;font-size:5.20px;color:#4a4a4a;letter-spacing:0.223px;">759 words</span>
<span class="t" style="left:96.60px;top:478.00px;font-size:5.20px;color:#4a4a4a;letter-spacing:0.128px;">Swedish (Sweden)</span>
<span class="t" style="left:159.00px;top:478.00px;font-size:5.20px;color:#4a4a4a;letter-spacing:0.179px;">Accessibility: Investigate</span>
<span class="t" style="left:574.70px;top:478.00px;font-size:5.20px;color:#4a4a4a;letter-spacing:0.148px;">Focus</span>
<span class="t" style="left:726.00px;top:478.00px;font-size:5.20px;color:#4a4a4a;letter-spacing:0.025px;">138%</span>
</body></html>
